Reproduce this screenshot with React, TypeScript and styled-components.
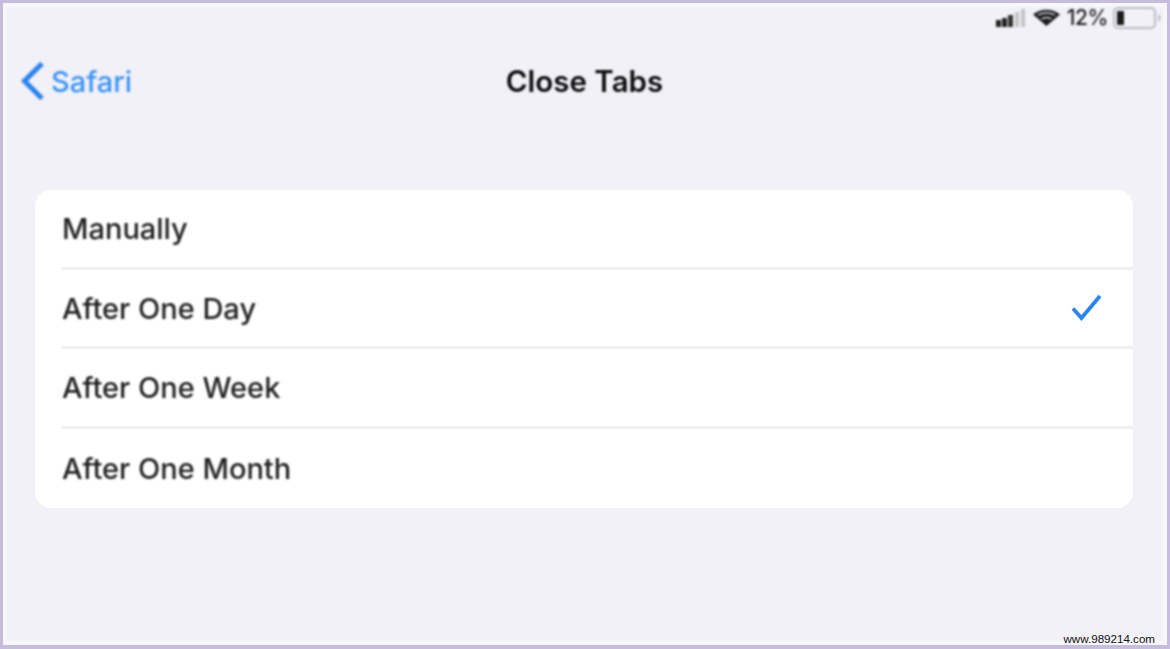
import React from "react";
import styled, { createGlobalStyle } from "styled-components";

const Global = createGlobalStyle`
  html, body { margin: 0; padding: 0; background: #f1f1f7; }
  * { box-sizing: border-box; }
`;

const Frame = styled.div`
  width: 1170px;
  height: 649px;
  border: 3px solid #c6bcdc;
  border-bottom-width: 4px;
  background: #f1f1f7;
  box-shadow: inset 0 0 0 4px #f7f7fb;
  display: flex;
  flex-direction: column;
  font-family: Inter, "Liberation Sans", sans-serif;
  overflow: hidden;
`;

const StatusBar = styled.div`
  height: 29px;
  display: flex;
  align-items: center;
  justify-content: flex-end;
  padding: 0 5px 0 0;
  gap: 7px;
  color: #1c1c1f;
  filter: blur(0.8px);
`;

const Percent = styled.span`
  font-size: 21px;
  font-weight: 500;
  letter-spacing: -0.4px;
  margin-right: -2px;
`;

const NavBar = styled.div`
  height: 100px;
  padding: 0 18px 0 17px;
  display: grid;
  grid-template-columns: 1fr auto 1fr;
  align-items: start;
`;

const Back = styled.div`
  display: flex;
  align-items: center;
  gap: 6px;
  height: 40px;
  margin-top: 29px;
  color: #3b94f6;
  font-size: 29px;
  font-weight: 500;
  filter: blur(0.8px);
`;

const Title = styled.div`
  margin-top: 29px;
  height: 40px;
  line-height: 40px;
  font-size: 29.5px;
  font-weight: 600;
  color: #0c0c0e;
  filter: blur(0.8px);
`;

const Card = styled.div`
  margin: 58px 34px 0 32px;
  height: 318px;
  background: #ffffff;
  border-radius: 16px;
  overflow: hidden;
  padding-left: 27px;
  flex-shrink: 0;
`;

const Row = styled.div<{ $last?: boolean }>`
  height: ${(p) => (p.$last ? "79px" : "79.5px")};
  display: flex;
  align-items: center;
  justify-content: space-between;
  padding: 1px 30px 0 0;
  border-bottom: ${(p) => (p.$last ? "none" : "3px solid #eff0f4")};
`;

const Label = styled.span`
  font-size: 29px;
  font-weight: 500;
  color: #1f1f22;
  filter: blur(0.8px);
`;

const Watermark = styled.div`
  margin-top: auto;
  padding: 0 12px 0 0;
  text-align: right;
  font-family: "Liberation Sans", Arial, sans-serif;
  font-size: 11.6px;
  line-height: 13px;
  color: #111111;
`;

const Signal = () => (
  <svg width="30" height="18" viewBox="0 0 30 18">
    <rect x="0" y="11" width="5" height="7" fill="#222" />
    <rect x="6" y="9" width="5" height="9" fill="#222" />
    <rect x="12" y="6" width="5" height="12" fill="#333" />
    <rect x="19" y="3" width="4" height="15" fill="#c4c4c8" />
    <rect x="25" y="0" width="4" height="18" fill="#c4c4c8" />
  </svg>
);

const Wifi = () => (
  <svg width="27" height="17" viewBox="0 0 27 17">
    <path d="M13.500 17 0 5.500C7-.8 20-.8 27 5.500Z" fill="#1c1c1f" />
    <path d="M5 6c5-2.800 12-2.800 17 0" stroke="#f1f1f7" strokeWidth="1.300" fill="none" />
    <path d="M8.500 10c3-1.600 7-1.600 10 0" stroke="#f1f1f7" strokeWidth="1.100" fill="none" />
  </svg>
);

const Battery = () => (
  <svg width="49" height="22" viewBox="0 0 49 22">
    <rect x="1" y="1" width="41" height="20" rx="4" fill="none" stroke="#bdbdc2" strokeWidth="2" />
    <rect x="4" y="4" width="7" height="14" rx="1" fill="#1c1c1f" />
    <path d="M45 7.500c3.500 1 3.500 6 0 7Z" fill="#bdbdc2" />
  </svg>
);

const Chevron = () => (
  <svg width="25" height="40" viewBox="0 0 25 40">
    <path d="M22 2.500 4.500 20 22 37.500" fill="none" stroke="#2c84ee" strokeWidth="5" />
  </svg>
);

const Check = () => (
  <svg width="32" height="28" viewBox="0 0 32 28">
    <path d="M2 14.500 10.500 24 29 2" fill="none" stroke="#2a84f2" strokeWidth="3.800" />
  </svg>
);

const options = ["Manually", "After One Day", "After One Week", "After One Month"];

export default function App() {
  return (
    <>
      <Global />
      <Frame>
        <StatusBar>
          <Signal />
          <Wifi />
          <Percent>12%</Percent>
          <Battery />
        </StatusBar>
        <NavBar>
          <Back>
            <Chevron />
            Safari
          </Back>
          <Title>Close Tabs</Title>
          <div />
        </NavBar>
        <Card>
          {options.map((o, i) => (
            <Row key={o} $last={i === options.length - 1}>
              <Label>{o}</Label>
              {i === 1 && <Check />}
            </Row>
          ))}
        </Card>
        <Watermark>www.989214.com</Watermark>
      </Frame>
    </>
  );
}
